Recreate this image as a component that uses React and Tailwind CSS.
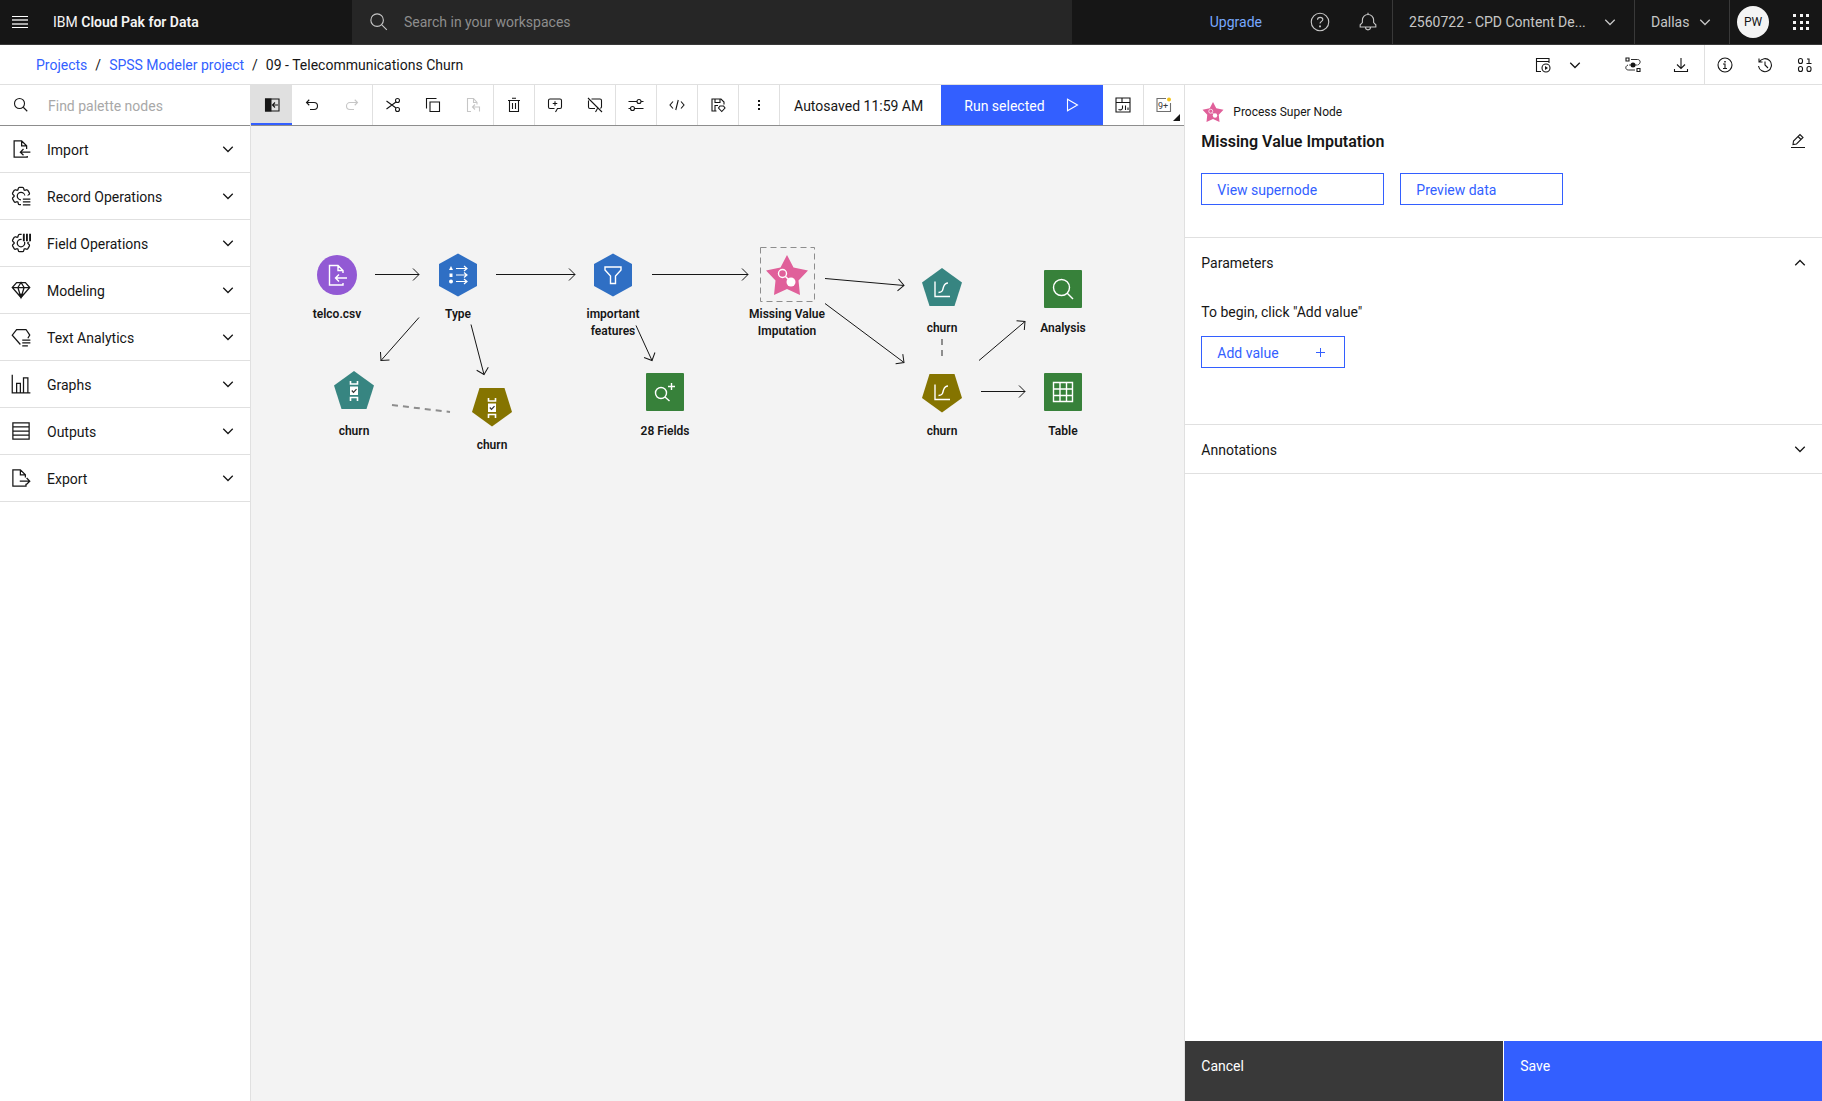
import React from "react";

const GEAR =
  "M27,16.76c0-.25,0-.5,0-.76s0-.51,0-.77l1.92-1.68A2,2,0,0,0,29.3,11L26.94,7a2,2,0,0,0-1.73-1,2,2,0,0,0-.64.1l-2.43.82a11.35,11.35,0,0,0-1.31-.75l-.51-2.52a2,2,0,0,0-2-1.61H13.64a2,2,0,0,0-2,1.61l-.51,2.52a11.48,11.48,0,0,0-1.32.75L7.43,6.06A2,2,0,0,0,6.79,6,2,2,0,0,0,5.06,7L2.7,11a2,2,0,0,0,.41,2.51L5,15.24c0,.25,0,.5,0,.76s0,.51,0,.77L3.11,18.45A2,2,0,0,0,2.7,21L5.06,25a2,2,0,0,0,1.73,1,2,2,0,0,0,.64-.1l2.43-.82a11.35,11.35,0,0,0,1.31.75l.51,2.52a2,2,0,0,0,2,1.61h4.72a2,2,0,0,0,2-1.61l.51-2.52a11.48,11.48,0,0,0,1.32-.75l2.42.82a2,2,0,0,0,.64.1,2,2,0,0,0,1.73-1L29.3,21a2,2,0,0,0-.41-2.51Z";

function Icon({ size = 16, d, children, className = "", sw = 2.2 }) {
  return (
    <svg
      width={size}
      height={size}
      viewBox="0 0 32 32"
      fill="none"
      stroke="currentColor"
      strokeWidth={sw}
      className={`shrink-0 ${className}`}
      aria-hidden="true"
    >
      {d && <path d={d} />}
      {children}
    </svg>
  );
}

const Solid = (p) => <path stroke="none" fill="currentColor" {...p} />;

const Search = (p) => (
  <Icon {...p}>
    <circle cx="13" cy="13" r="10" />
    <path d="M20.500 20.500 28.500 28.500" />
  </Icon>
);
const Chevron = ({ up, ...p }) => (
  <Icon sw={2.6} {...p} d={up ? "M6.5 20.5 16 11l9.5 9.5" : "M6.5 11.5 16 21l9.5-9.5"} />
);
const FileImport = (p) => (
  <Icon {...p} d="M26 27v2H5V3h12l8 8v5M17 3v8h8M31 21H15M20 16l-5 5 5 5" />
);
const FileExport = (p) => (
  <Icon {...p} d="M24 25v4H3V3h12l8 8v4M15 3v8h8M14 21h16M25 16l5 5-5 5" />
);
const RecordOps = (p) => (
  <Icon {...p}>
    <clipPath id="gearRecord">
      <path d="M0 0h32v15H21v-2h-3v5h-2v14H0z" />
    </clipPath>
    <g clipPath="url(#gearRecord)">
      <path d={GEAR} />
      <circle cx="16" cy="16" r="6" />
    </g>
    <path d="M19 21h12M19 25.500h12M19 30h12" />
  </Icon>
);
const FieldOps = (p) => (
  <Icon {...p}>
    <clipPath id="gearField">
      <path d="M0 0h17v14h15v18H0z" />
    </clipPath>
    <g clipPath="url(#gearField)">
      <path d={GEAR} />
      <circle cx="16" cy="16" r="6" />
    </g>
    <path d="M20.500 1v12M25.500 1v12M30.500 1v12" strokeWidth="3" />
  </Icon>
);
const Gem = (p) => (
  <Icon {...p}>
    <path d="M9 4h14l7 8-14 16L2 12zM2 12h28M16 4l-5 8 5 16 5-16z" />
    <Solid d="M11 22h10l-5 7z" />
  </Icon>
);
const TextGem = (p) => (
  <Icon {...p} d="M15 28 2 13l7-9h15l6 9-3 5M18 21h13M18 25.500h13M18 30h9" />
);
const Bars = (p) => <Icon {...p} d="M2 1v29h29M9 30V15h6v15M20 30V6h7v24" />;
const Rows = (p) => <Icon {...p} d="M3 3h26v26H3zM3 9.500h26M3 16h26M3 22.500h26" />;

const PanelOpen = () => (
  <Icon>
    <path d="M3 4h27v24H3z" />
    <Solid d="M2 3h13v26H2z" />
    <path d="M28 16H18M22 11l-5 5 5 5" />
  </Icon>
);
const Undo = () => <Icon d="M10.500 5.500 5 11l5.500 5.500M6 11h14a7 7 0 0 1 0 14h-8" />;
const Redo = () => <Icon d="M21.500 5.500 27 11l-5.500 5.500M26 11H12a7 7 0 0 0 0 14h8" />;
const Cut = () => (
  <Icon>
    <circle cx="25" cy="7" r="4" />
    <circle cx="25" cy="25" r="4" />
    <path d="M22 10 3 24M22 22 3 8" />
  </Icon>
);
const Copy = () => <Icon d="M10 10h19v19H10zM3 23V3h20" />;
const Paste = () => <Icon d="M12 29H5V3h12l7 8v4M17 3v8h7M29 29v-9H16M20 15l-5 5 5 5" />;
const Trash = () => <Icon d="M4 7h24M7 7v22h18V7M12 2.500h8M13 12v12M19 12v12" />;
const AddComment = () => (
  <Icon d="M17 30l4-7h5a3 3 0 0 0 3-3V7a3 3 0 0 0-3-3H6a3 3 0 0 0-3 3v13a3 3 0 0 0 3 3h9M16 8.500v9M11.500 13h9" />
);
const HideComment = () => (
  <Icon d="M17 30l4-7M9 4h17a3 3 0 0 1 3 3v13l-2 3M3 7v13a3 3 0 0 0 3 3h10M2 2l28 28" />
);
const Sliders = () => (
  <Icon>
    <circle cx="22" cy="9" r="4" />
    <circle cx="9" cy="23" r="4" />
    <path d="M1 9h17M26 9h5M1 23h4M13 23h18" />
  </Icon>
);
const Code = () => <Icon d="M8 9l-6 7 6 7M24 9l6 7-6 7M18.500 6l-5 20" />;
const SaveModel = () => (
  <Icon d="M13 28H4V4h18l6 6v5M10 4v7h10V4M10 28V17h6M20 18h7l3 4-6.500 7L17 22z" />
);
const Kebab = () => (
  <Icon>
    <Solid d="M14 6h4v4h-4zM14 14h4v4h-4zM14 22h4v4h-4z" />
  </Icon>
);
const Play = () => <Icon d="M7 4.500v23L27 16z" />;
const Dashboard = () => (
  <Icon d="M2 2h28v28H2zM2 11h28M14 2v9M7 25c4 2 8 0 8-3v-5M21 26v-9M26 26v-5" />
);
const Notifications = () => (
  <Icon className="text-[#6f6f6f]">
    <path d="M20 3H2v26h27V12" />
    <text x="4" y="23" fontSize="18" fill="#393939" stroke="none" fontFamily="Roboto, sans-serif">
      9+
    </text>
    <circle cx="26" cy="5" r="4" fill="#f1c21b" stroke="none" />
  </Icon>
);
const Schedule = () => (
  <Icon>
    <path d="M12 29H3V3h25v9M3 9h25" />
    <circle cx="22" cy="22" r="8" />
    <Solid d="M20 18l6 4-6 4z" />
  </Icon>
);
const FlowView = () => (
  <Icon>
    <path d="M2 2h6v6H2zM24 23h6v6h-6z" />
    <path d="M12 5h13c7 0 7 9 0 11M20 26H7c-7 0-7-8-1-10" strokeWidth="1.800" />
    <path d="M8 16h16" strokeWidth="1.500" />
    <circle cx="16" cy="16" r="5" fill="currentColor" stroke="none" />
  </Icon>
);
const Download = () => <Icon d="M16 2v20M8 15l8 8 8-8M3 24v5h26v-5" />;
const Info = () => (
  <Icon>
    <circle cx="16" cy="16" r="14" />
    <path d="M12 14h4v9M12 23h8" />
    <Solid d="M14.500 8h3v3h-3z" />
  </Icon>
);
const History = () => <Icon d="M4 3v7h7M4.500 10A13 13 0 1 1 3 18M16 9v7l6 6" />;
const Data = () => (
  <Icon>
    <rect x="3" y="3" width="8" height="10" rx="4" />
    <rect x="3" y="19" width="8" height="10" rx="4" />
    <rect x="20" y="19" width="8" height="10" rx="4" />
    <path d="M20 4h4v9M19 13h10" />
  </Icon>
);
const Edit = () => <Icon d="M2 29h28M6 23l1-7L20 3l6 6-13 13zM16 7l6 6" />;

function MenuIcon() {
  return (
    <svg width="16" height="16" viewBox="0 0 16 16" aria-hidden="true">
      <path d="M0 2h16v1H0zM0 13h16v1H0z" fill="#fff" />
      <path d="M0 5h16v2H0zM0 9h16v2H0z" fill="#a8a8a8" />
    </svg>
  );
}

function TopBar() {
  const sep = "border-l border-[#393939]";
  return (
    <header className="flex h-[45px] shrink-0 items-stretch border-b border-[#393939] bg-[#161616] text-sm text-[#c6c6c6]">
      <div className="flex w-[352px] shrink-0 items-center gap-[25px] pl-3">
        <button aria-label="Menu">
          <MenuIcon />
        </button>
        <span className="whitespace-nowrap text-[#f4f4f4]">
          IBM <b className="font-semibold">Cloud Pak for Data</b>
        </span>
      </div>
      <label className="flex min-w-0 flex-1 items-center gap-[15px] bg-[#262626] pl-[17px]">
        <Search size={20} sw={1.8} />
        <input
          type="search"
          aria-label="Search in your workspaces"
          placeholder="Search in your workspaces"
          className="min-w-0 flex-1 bg-transparent text-sm outline-none placeholder:text-[#8d8d8d]"
        />
      </label>
      <div className="flex shrink-0 items-stretch">
        <a href="#upgrade" className="flex w-[238px] items-center justify-end pr-12 text-[#78a9ff]">
          Upgrade
        </a>
        <button aria-label="Help">
          <Icon size={20} sw={1.8}>
            <circle cx="16" cy="16" r="14" />
            <path d="M12 12.500c0-5.500 8.500-5 8.500-.5 0 3-4.500 3-4.500 6.500" />
            <Solid d="M14.500 21.500h3v3h-3z" />
          </Icon>
        </button>
        <button aria-label="Notifications" className="ml-7 mr-[14px]">
          <Icon
            size={20}
            sw={1.8}
            d="M3.500 24v-3.500L7 17v-4a9 9 0 0 1 18 0v4l3.500 3.500V24zM16 1v3M12 24.500a4 4 0 0 0 8 0"
          />
        </button>
        <button className={`flex w-[242px] items-center justify-between pl-4 pr-4 ${sep}`}>
          <span className="whitespace-nowrap">2560722 - CPD Content De...</span>
          <Chevron />
        </button>
        <button className={`flex w-[95px] items-center justify-between pl-4 pr-4 ${sep}`}>
          Dallas <Chevron />
        </button>
        <div className={`flex w-[93px] items-center justify-between pl-[7px] pr-[13px] ${sep}`}>
          <button className="flex h-8 w-8 items-center justify-center rounded-full bg-[#f4f4f4] text-xs text-[#161616]">
            PW
          </button>
          <button aria-label="App switcher">
            <svg width="16" height="16" viewBox="0 0 16 16" fill="#f4f4f4" aria-hidden="true">
              {[0, 7, 13].map((y) => [0, 7, 13].map((x) => <rect key={`${x}-${y}`} x={x} y={y} width="3" height="3" />))}
            </svg>
          </button>
        </div>
      </div>
    </header>
  );
}

function Breadcrumbs() {
  return (
    <div className="flex h-10 shrink-0 items-stretch justify-between border-b border-[#e0e0e0] bg-white text-[#161616]">
      <nav aria-label="Breadcrumb" className="flex items-center gap-2 whitespace-nowrap pl-9 text-sm">
        <a href="#projects" className="text-[#335fff]">Projects</a>
        <span>/</span>
        <a href="#modeler" className="text-[#335fff]">SPSS Modeler project</a>
        <span>/</span>
        <span>09 - Telecommunications Churn</span>
      </nav>
      <div className="flex items-stretch">
        <button aria-label="Schedule" className="mr-4"><Schedule /></button>
        <button aria-label="More schedule options" className="mr-[42px]"><Chevron /></button>
        <button aria-label="Flow view" className="mr-8"><FlowView /></button>
        <button aria-label="Download" className="mr-[15px]"><Download /></button>
        <div className="flex items-stretch gap-6 border-l border-[#e0e0e0] pl-3 pr-[9px]">
          <button aria-label="Information"><Info /></button>
          <button aria-label="History"><History /></button>
          <button aria-label="Data"><Data /></button>
        </div>
      </div>
    </div>
  );
}

const PALETTE = [
  ["Import", FileImport],
  ["Record Operations", RecordOps],
  ["Field Operations", FieldOps],
  ["Modeling", Gem],
  ["Text Analytics", TextGem],
  ["Graphs", Bars],
  ["Outputs", Rows],
  ["Export", FileExport],
];

function Palette() {
  return (
    <aside className="w-[251px] shrink-0 border-r border-[#e0e0e0] bg-white">
      <label className="flex h-[41px] items-center gap-[19px] border-b border-[#8d8d8d] pl-[13px]">
        <Search size={16} />
        <input
          type="search"
          aria-label="Find palette nodes"
          placeholder="Find palette nodes"
          className="w-40 bg-transparent pt-0.5 text-sm outline-none placeholder:text-[#a8a8a8]"
        />
      </label>
      {PALETTE.map(([name, NodeIcon]) => (
        <button key={name} className="flex h-[47px] w-full items-center border-b border-[#e0e0e0] pl-[11px] pr-[14px]">
          <NodeIcon size={20} sw={2} />
          <span className="flex-1 pl-4 pt-0.5 text-left text-sm">{name}</span>
          <Chevron />
        </button>
      ))}
    </aside>
  );
}

function Tool({ label, sep, children, className = "w-10" }) {
  return (
    <button
      aria-label={label}
      className={`flex shrink-0 items-center justify-center ${sep ? "box-content border-r border-[#e0e0e0]" : ""} ${className}`}
    >
      {children}
    </button>
  );
}

function Toolbar() {
  return (
    <div className="flex h-[41px] shrink-0 items-stretch border-b border-[#8d8d8d] bg-white">
      <Tool label="Palette" className="w-[41px] border-y-2 border-b-[#335fff] border-t-transparent bg-[#e0e0e0]"><PanelOpen /></Tool>
      <Tool label="Undo"><Undo /></Tool>
      <Tool label="Redo" sep className="w-10 text-[#c6c6c6]"><Redo /></Tool>
      <Tool label="Cut"><Cut /></Tool>
      <Tool label="Copy"><Copy /></Tool>
      <Tool label="Paste" sep className="w-10 text-[#c6c6c6]"><Paste /></Tool>
      <Tool label="Delete" sep><Trash /></Tool>
      <Tool label="Add comment"><AddComment /></Tool>
      <Tool label="Hide comments" sep><HideComment /></Tool>
      <Tool label="Settings" sep><Sliders /></Tool>
      <Tool label="Code" sep><Code /></Tool>
      <Tool label="Save model" sep><SaveModel /></Tool>
      <Tool label="More" sep><Kebab /></Tool>
      <span className="flex min-w-0 flex-1 items-center justify-center whitespace-nowrap pr-1 pt-0.5 text-sm">
        Autosaved 11:59 AM
      </span>
      <button className="flex w-[162px] shrink-0 items-center justify-between bg-[#335fff] px-[23px] text-sm text-white">
        <span className="pt-0.5">Run selected</span>
        <Play />
      </button>
      <Tool label="Dashboard" sep><Dashboard /></Tool>
      <Tool label="Messages" className="relative w-10">
        <Notifications />
        <svg width="7" height="7" viewBox="0 0 6 6" className="absolute bottom-1 right-1" aria-hidden="true">
          <path d="M6 0v6H0z" fill="#161616" />
        </svg>
      </Tool>
    </div>
  );
}

const SHAPES = {
  circle: <circle cx="22" cy="22" r="20" />,
  hex: <path d="M22 .5 41 11v22L22 43.500 3 33V11z" />,
  square: <rect x="3" y="3" width="38" height="38" rx="1" />,
  pentUp: <path d="M22 3 42 17.500 34.500 41h-25L2 17.500z" />,
  pentDown: <path d="M22 41.500 42 27 34.500 3h-25L2 27z" />,
  star: <path d="M22 2 28.500 14.500 43 17.500 33.500 27.500 35 42 22 36 9 42l1.500-14.500L1 17.500 15.500 14.500z" />,
};

const GLYPHS = {
  file: <path d="M28 30v2H14.500V12.500H23l5 5V20M23 12.500v5h5M32 25H20.500M24 21.500 20.500 25l3.500 3.500" />,
  type: (
    <>
      <path
        d="M20 15.500h11M28 13l3 2.500-3 2.500M20 22h11M28 19.500l3 2.500-3 2.500M20 28.500h11M28 26l3 2.500-3 2.500"
        strokeWidth="1.200"
      />
      <path d="M15 13l2 4h-4zM13.500 20.500h3v3.500h-3z" fill="#fff" stroke="none" />
      <circle cx="15" cy="28.500" r="2" fill="#fff" stroke="none" />
    </>
  ),
  filter: <path d="M14 14h16v3l-5.500 6v7.500h-5V23L14 17z" />,
  node: (
    <>
      <circle cx="17.500" cy="20.500" r="4" />
      <path d="M20.500 23.500 25 28" />
      <circle cx="26" cy="29" r="4.500" fill="#fff" stroke="none" />
    </>
  ),
  curve: <path d="M15 16.500V31.500H30M18.500 27.500c5-.5 4-3 5-5.500s1.500-4 4.500-4" />,
  curveHigh: <path d="M15 13.500V28.500H30M18.500 24.500c5-.5 4-3 5-5.500s1.500-4 4.500-4" />,
  search: (
    <>
      <circle cx="20.500" cy="20.500" r="8" />
      <path d="M26 26l6 6" />
    </>
  ),
  searchPlus: (
    <>
      <circle cx="18" cy="23" r="5.500" />
      <path d="M22 27l4.500 4M28.500 13v7M25 16.500h7" />
    </>
  ),
  table: <path d="M12.500 12.500h19v19h-19zM12.500 19h19M12.500 25.500h19M19 12.500v19M25.500 12.500v19" />,
  check: (
    <>
      <path d="M18.500 13v3h7v-3M18.500 33v-3.500h7V33" strokeWidth="1.600" />
      <rect x="18" y="18.500" width="8" height="8.500" fill="#fff" stroke="none" />
      <path d="M19.800 22.500l1.700 1.800 3-3.200" stroke="#333" strokeWidth="1.200" />
    </>
  ),
};

/* x and y give the centre of each node on the canvas. */
const NODES = [
  { x: 86, y: 149, shape: "circle", color: "#9259d4", glyph: "file", label: "telco.csv", gap: 9 },
  { x: 207, y: 149, shape: "hex", color: "#2f6fc4", glyph: "type", label: "Type", gap: 9 },
  { x: 362, y: 149, shape: "hex", color: "#2f6fc4", glyph: "filter", label: "important features", gap: 9 },
  { x: 536, y: 149, shape: "star", color: "#e0609a", glyph: "node", label: "Missing Value Imputation", gap: 9, selected: true },
  { x: 691, y: 161, shape: "pentUp", color: "#378581", glyph: "curve", label: "churn", gap: 11 },
  { x: 812, y: 163, shape: "square", color: "#37813a", glyph: "search", label: "Analysis", gap: 9 },
  { x: 691, y: 267, shape: "pentDown", color: "#857400", glyph: "curveHigh", label: "churn", gap: 8 },
  { x: 812, y: 266, shape: "square", color: "#37813a", glyph: "table", label: "Table", gap: 9 },
  { x: 414, y: 266, shape: "square", color: "#37813a", glyph: "searchPlus", label: "28 Fields", gap: 9 },
  { x: 103, y: 264, shape: "pentUp", color: "#378581", glyph: "check", label: "churn", gap: 11 },
  { x: 241, y: 281, shape: "pentDown", color: "#857400", glyph: "check", label: "churn", gap: 8 },
];

const LINKS = [
  [124, 149, 168, 149],
  [245, 149, 324, 149],
  [401, 149, 497, 149],
  [574, 153, 653, 160],
  [574, 178, 653, 237],
  [728, 235, 774, 196],
  [730, 266, 774, 266],
  [168, 192, 130, 235],
  [220, 199, 233, 249],
  [385, 200, 401, 235],
];

function Canvas() {
  return (
    <div className="relative min-h-[360px] flex-1 overflow-hidden bg-[#f3f3f3]">
      <svg className="absolute inset-0 h-full w-full" fill="none" aria-hidden="true">
        <marker id="arrow" markerUnits="userSpaceOnUse" markerWidth="14" markerHeight="14" refX="7" refY="7" viewBox="0 0 14 14" orient="auto">
          <path d="M1 1l6 6-6 6" stroke="#161616" fill="none" />
        </marker>
        {LINKS.map(([a, b, c, d]) => (
          <path key={`${a}-${b}-${c}-${d}`} d={`M${a} ${b - 0.5}L${c} ${d - 0.5}`} stroke="#161616" markerEnd="url(#arrow)" />
        ))}
        <path d="M141 279l58 7M691 213v22" stroke="#8d8d8d" strokeWidth="2" strokeDasharray="6 5" />
      </svg>
      {NODES.map((n) => (
        <div
          key={`${n.x}-${n.y}`}
          className="absolute flex w-24 -translate-x-12 flex-col items-center"
          style={{ left: n.x, top: n.y - 22, rowGap: n.gap }}
        >
          <svg width="44" height="44" viewBox="0 0 44 44" className="overflow-visible" aria-hidden="true">
            {n.selected && (
              <rect x="-4.500" y="-5.500" width="54" height="54" fill="none" stroke="#8d8d8d" strokeDasharray="6 4" />
            )}
            <g fill={n.color}>{SHAPES[n.shape]}</g>
            <g fill="none" stroke="#fff" strokeWidth="1.400">{GLYPHS[n.glyph]}</g>
          </svg>
          <span className="text-center text-xs/[17px] font-semibold">{n.label}</span>
        </div>
      ))}
    </div>
  );
}

function DetailsPanel() {
  const outline = "flex h-8 items-center border border-[#335fff] px-[15px] text-sm text-[#335fff]";
  return (
    <section className="flex w-[35%] shrink-0 flex-col border-l border-[#e0e0e0] bg-white">
      <div className="border-b border-[#e0e0e0] px-4 pb-8 pt-4">
        <div className="flex items-center gap-2 text-xs">
          <svg width="24" height="22" viewBox="0 0 44 44" aria-hidden="true">
            <g fill="#e0609a">{SHAPES.star}</g>
            <g fill="none" stroke="#fff" strokeWidth="1.400">{GLYPHS.node}</g>
          </svg>
          Process Super Node
        </div>
        <div className="flex h-9 items-center justify-between">
          <h1 className="pt-0.5 text-base font-semibold">Missing Value Imputation</h1>
          <button aria-label="Edit name"><Edit /></button>
        </div>
        <div className="mt-[14px] flex gap-4">
          <button className={`w-[183px] ${outline}`}>
            <span className="pt-0.5">View supernode</span>
          </button>
          <button className={`w-[163px] ${outline}`}>
            <span className="pt-0.5">Preview data</span>
          </button>
        </div>
      </div>
      <div className="border-b border-[#e0e0e0] pb-14">
        <button className="flex h-[50px] w-full items-center justify-between pl-4 pr-[14px] text-sm">
          Parameters <Chevron up />
        </button>
        <div className="px-4">
          <p className="my-[14px] text-sm">To begin, click "Add value"</p>
          <button className={`w-36 justify-between ${outline}`}>
            <span className="pt-0.5">Add value</span>
            <svg width="18" height="9" viewBox="0 0 18 9" fill="none" stroke="currentColor" aria-hidden="true">
              <path d="M5 4.500h9M9.500 0v9" />
            </svg>
          </button>
        </div>
      </div>
      <button className="flex h-[49px] items-center justify-between border-b border-[#e0e0e0] pl-4 pr-[14px] text-sm">
        <span className="pt-0.5">Annotations</span>
        <Chevron />
      </button>
      <div className="mt-auto grid h-[60px] grid-cols-2 gap-px text-sm text-white">
        <button className="flex items-start bg-[#393939] px-4 pt-[15px]">Cancel</button>
        <button className="flex items-start bg-[#335fff] px-4 pt-[15px]">Save</button>
      </div>
    </section>
  );
}

export default function App() {
  return (
    <div className="flex min-h-screen flex-col bg-white font-[Roboto,'Noto_Sans',sans-serif] text-[#161616]">
      <TopBar />
      <Breadcrumbs />
      <div className="flex flex-1 items-stretch">
        <Palette />
        <main className="flex min-w-0 flex-1 flex-col">
          <Toolbar />
          <Canvas />
        </main>
        <DetailsPanel />
      </div>
    </div>
  );
}
